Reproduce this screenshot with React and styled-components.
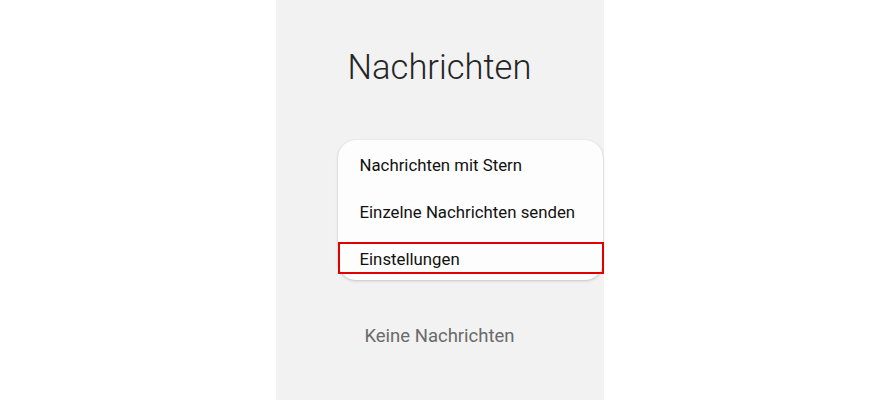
import styled, { createGlobalStyle } from "styled-components";

const GlobalStyle = createGlobalStyle`
  html, body {
    margin: 0;
    padding: 0;
    background: #ffffff;
    font-family: Roboto, "Noto Sans", sans-serif;
  }
  * {
    box-sizing: border-box;
  }
`;

const Page = styled.div`
  display: flex;
  justify-content: center;
  height: 100vh;
`;

const Screen = styled.div`
  width: 328px;
  height: 100%;
  background: #f2f2f2;
  display: flex;
  flex-direction: column;
  align-items: center;
`;

const Title = styled.h1`
  margin: 50px 0 0;
  font-size: 34.5px;
  line-height: 1;
  font-weight: 300;
  color: #252525;
`;

const Menu = styled.ul`
  align-self: flex-end;
  width: 265px;
  margin: 55px 1px 0 0;
  padding: 5px 0 1px;
  list-style: none;
  display: flex;
  flex-direction: column;
  gap: 7px;
  background: #fdfdfd;
  border-radius: 18px;
  box-shadow: 0 1px 3px rgba(0, 0, 0, 0.18), 0 0 1px rgba(0, 0, 0, 0.1);
`;

const MenuItem = styled.li`
  position: relative;
  height: 40px;
  display: flex;
  align-items: center;
  padding-left: 22px;
  font-size: 16.8px;
  color: #111111;

  ${(props) =>
    props.$marked &&
    `
    &::after {
      content: "";
      position: absolute;
      left: 0;
      right: -1px;
      top: 3px;
      bottom: 5px;
      border: 2px solid #e00000;
    }
  `}
`;

const Empty = styled.p`
  margin: 47px 0 0;
  font-size: 18.5px;
  line-height: 1;
  color: #6a6a6a;
`;

export default function App() {
  const items = [
    "Nachrichten mit Stern",
    "Einzelne Nachrichten senden",
    "Einstellungen",
  ];

  return (
    <Page>
      <GlobalStyle />
      <Screen>
        <Title>Nachrichten</Title>
        <Menu>
          {items.map((item, i) => (
            <MenuItem key={i} $marked={i === 2}>
              {item}
            </MenuItem>
          ))}
        </Menu>
        <Empty>Keine Nachrichten</Empty>
      </Screen>
    </Page>
  );
}
